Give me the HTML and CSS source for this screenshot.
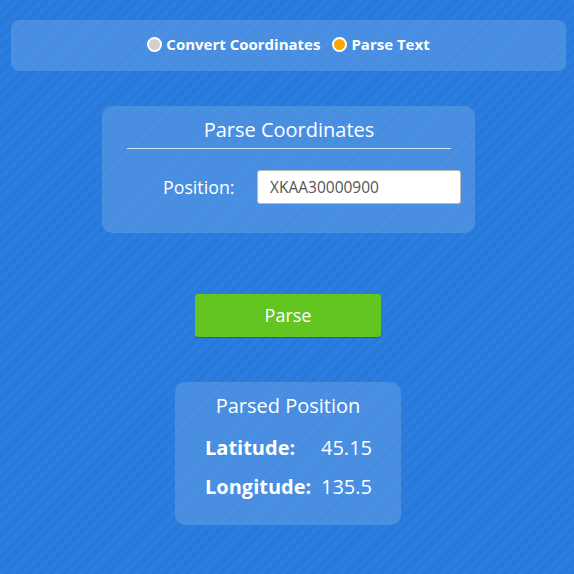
FILE: index.html
```html
<!DOCTYPE html>
<html>
<head>
<meta charset="utf-8">
<link rel="stylesheet" href="styles.css">
</head>
<body>
<div class="page">
  <div class="modebar">
    <label class="mode"><span class="radio"></span>Convert Coordinates</label>
    <label class="mode"><span class="radio on"></span>Parse Text</label>
  </div>
  <div class="card parse-card">
    <div class="card-title">Parse Coordinates</div>
    <div class="rule"></div>
    <div class="field">
      <span class="field-label">Position:</span>
      <div class="input">XKAA30000900</div>
    </div>
  </div>
  <button class="btn">Parse</button>
  <div class="card result-card">
    <div class="card-title">Parsed Position</div>
    <div class="row"><span class="key">Latitude:</span><span class="val">45.15</span></div>
    <div class="row"><span class="key">Longitude:</span><span class="val">135.5</span></div>
  </div>
</div>
</body>
</html>
```
FILE: styles.css
```css
html, body { margin: 0; padding: 0; }
body {
  width: 574px; height: 574px; overflow: hidden;
  font-family: "Open Sans", sans-serif;
  color: #fff;
  background-color: #2a7de1;
  background-image: repeating-linear-gradient(135deg, rgba(0,0,0,0.035) 0 4px, rgba(255,255,255,0) 4px 8px);
}
.page {
  display: flex; flex-direction: column; align-items: center;
  padding-top: 20px;
}
.modebar {
  width: 555px; height: 51px; box-sizing: border-box;
  margin-left: 3px;
  background: rgba(255,255,255,0.15);
  border-radius: 8px;
  display: flex; align-items: center; justify-content: center;
  gap: 12px;
  font-size: 15px; font-weight: 700;
  padding: 0 0 3px 0;
}
.mode { display: flex; align-items: center; gap: 4px; }
.radio {
  width: 11px; height: 11px; border-radius: 50%;
  background: #cfd0cd; border: 2px solid #fff;
  display: inline-block;
}
.radio.on { background: #ffa500; }
.card {
  background: rgba(255,255,255,0.15);
  border-radius: 10px;
  box-sizing: border-box;
}
.parse-card {
  margin-top: 35px;
  width: 373px; height: 127px;
  padding: 9px 24px 0 25px;
  margin-left: 3px;
}
.card-title { font-size: 20px; text-align: center; line-height: 30px; }
.rule { height: 1px; background: rgba(255,255,255,0.75); margin-top: 3px; }
.field { display: flex; align-items: center; margin-top: 21px; padding-left: 36px; }
.field-label { font-size: 17.8px; width: 94px; flex-shrink: 0; }
.input {
  width: 204px; height: 34px; box-sizing: border-box; flex-shrink: 0;
  background: #fff; color: #555;
  border: 1px solid #bbb; border-radius: 3px;
  font-size: 15.5px; line-height: 32px; padding-left: 12px;
  font-family: "Open Sans", sans-serif;
}
.btn {
  margin-top: 61px; margin-left: 2px;
  width: 186px; height: 43px;
  background: #63c51f; color: #fff;
  border: none; border-radius: 3px;
  box-shadow: 0 1px 1px rgba(0,0,0,0.25);
  font-family: "Open Sans", sans-serif; font-size: 18px;
  padding: 0 0 2px;
}
.result-card {
  margin-top: 45px; margin-left: 2px;
  width: 226px; height: 143px;
  padding: 9px 0 0 30px;
}
.result-card .card-title { padding-right: 30px; }
.row { display: flex; font-size: 20px; line-height: 26px; margin-top: 13px; }
.result-card .card-title + .row { margin-top: 14px; }
.key { font-weight: 700; width: 116px; }
```
